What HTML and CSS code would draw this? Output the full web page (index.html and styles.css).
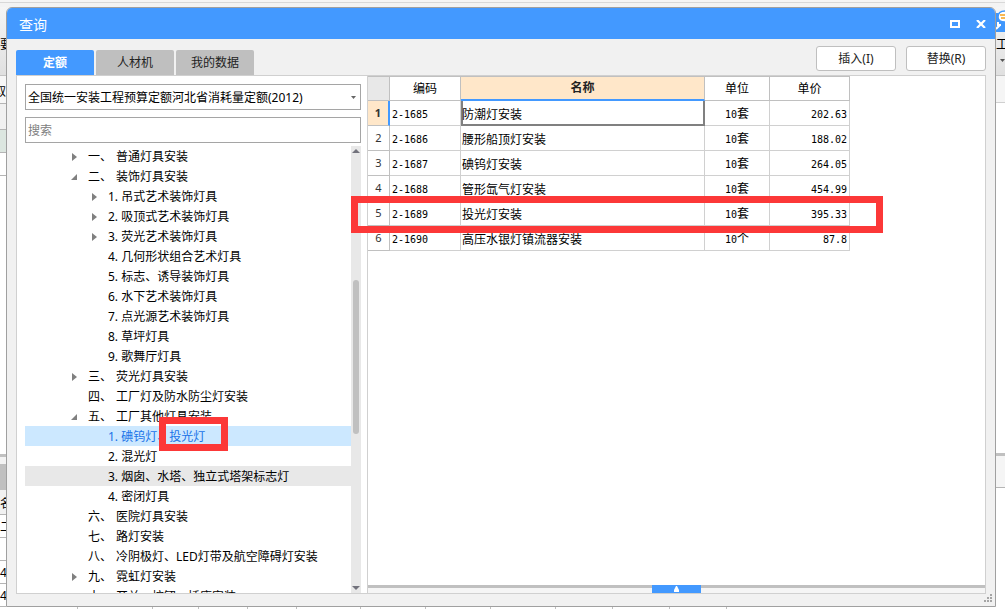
FILE: index.html
```
<!DOCTYPE html>
<html lang="zh-CN">
<head>
<meta charset="utf-8">
<title>查询</title>
<link rel="stylesheet" href="styles.css">
</head>
<body>
<div class="app">
  <div class="app-top"></div>
  <div class="app-middle">
    <div class="edge edge-left">
      <div class="ribbon">要</div>
      <div class="band">取</div>
      <div class="subband"></div>
      <div class="mint"></div>
      <div class="row-a"></div>
      <div class="blank"></div>
      <div class="dark"></div>
      <div class="heading">名</div>
      <div class="cell">二</div>
      <div class="cell"></div>
      <div class="cell">4</div>
      <div class="cell">4</div>
    </div>

    <section class="dialog" aria-label="查询">
      <header class="titlebar">
        <h1>查询</h1>
        <button class="win-btn" aria-label="最大化"><svg width="10" height="8" viewBox="0 0 10 8"><rect x="1" y="1" width="8" height="6" fill="none" stroke="#fff" stroke-width="2"/></svg></button>
        <button class="win-btn" aria-label="关闭"><svg width="10" height="8" viewBox="0 0 10 8"><path d="M1 0L9 8M9 0L1 8" stroke="#fff" stroke-width="2.2"/></svg></button>
      </header>

      <div class="toolbar">
        <nav class="tabs">
          <button class="tab active">定额</button>
          <button class="tab">人材机</button>
          <button class="tab">我的数据</button>
        </nav>
        <div class="actions">
          <button class="action">插入(I)</button>
          <button class="action">替换(R)</button>
        </div>
      </div>

      <div class="content">
        <aside class="side">
          <div class="select-wrap">
            <select class="field" aria-label="定额库"><option>全国统一安装工程预算定额河北省消耗量定额(2012)</option></select>
            <svg class="caret" width="5" height="3" viewBox="0 0 5 3"><path d="M0 0H5L2.5 3Z" fill="#666"/></svg>
          </div>
          <input class="field" type="text" placeholder="搜索" aria-label="搜索">
          <div class="tree-wrap">
            <ul class="tree">
              <li class="node closed"><span class="num">一、</span>普通灯具安装</li>
              <li class="node open"><span class="num">二、</span>装饰灯具安装</li>
              <li class="node sub closed">1. 吊式艺术装饰灯具</li>
              <li class="node sub closed">2. 吸顶式艺术装饰灯具</li>
              <li class="node sub closed">3. 荧光艺术装饰灯具</li>
              <li class="node sub">4. 几何形状组合艺术灯具</li>
              <li class="node sub">5. 标志、诱导装饰灯具</li>
              <li class="node sub">6. 水下艺术装饰灯具</li>
              <li class="node sub">7. 点光源艺术装饰灯具</li>
              <li class="node sub">8. 草坪灯具</li>
              <li class="node sub">9. 歌舞厅灯具</li>
              <li class="node closed"><span class="num">三、</span>荧光灯具安装</li>
              <li class="node"><span class="num">四、</span>工厂灯及防水防尘灯安装</li>
              <li class="node open"><span class="num">五、</span>工厂其他灯具安装</li>
              <li class="node sub selected">1. 碘钨灯、<span class="marked">投光灯</span></li>
              <li class="node sub">2. 混光灯</li>
              <li class="node sub hover">3. 烟囱、水塔、独立式塔架标志灯</li>
              <li class="node sub">4. 密闭灯具</li>
              <li class="node"><span class="num">六、</span>医院灯具安装</li>
              <li class="node"><span class="num">七、</span>路灯安装</li>
              <li class="node"><span class="num">八、</span>冷阴极灯、LED灯带及航空障碍灯安装</li>
              <li class="node closed"><span class="num">九、</span>霓虹灯安装</li>
              <li class="node"><span class="num">十、</span>开关、按钮、插座安装</li>
            </ul>
            <div class="scrollbar">
              <svg width="8" height="4" viewBox="0 0 8 4"><path d="M0 4L4 0L8 4Z" fill="#72727c"/></svg>
              <div class="track"><div class="thumb"></div></div>
              <svg width="8" height="4" viewBox="0 0 8 4"><path d="M0 0H8L4 4Z" fill="#72727c"/></svg>
            </div>
          </div>
        </aside>

        <main class="results">
          <table class="grid">
            <colgroup><col class="c-idx"><col class="c-code"><col class="c-name"><col class="c-unit"><col class="c-price"></colgroup>
            <thead>
              <tr><th class="corner"></th><th>编码</th><th class="current">名称</th><th>单位</th><th>单价</th></tr>
            </thead>
            <tbody>
              <tr class="first"><th>1</th><td class="mono">2-1685</td><td class="name">防潮灯安装</td><td class="unit"><span class="mono">10</span>套</td><td class="mono price">202.63</td></tr>
              <tr><th>2</th><td class="mono">2-1686</td><td class="name">腰形船顶灯安装</td><td class="unit"><span class="mono">10</span>套</td><td class="mono price">188.02</td></tr>
              <tr><th>3</th><td class="mono">2-1687</td><td class="name">碘钨灯安装</td><td class="unit"><span class="mono">10</span>套</td><td class="mono price">264.05</td></tr>
              <tr><th>4</th><td class="mono">2-1688</td><td class="name">管形氙气灯安装</td><td class="unit"><span class="mono">10</span>套</td><td class="mono price">454.99</td></tr>
              <tr class="marked-row"><th>5</th><td class="mono">2-1689</td><td class="name">投光灯安装</td><td class="unit"><span class="mono">10</span>套</td><td class="mono price">395.33</td></tr>
              <tr><th>6</th><td class="mono">2-1690</td><td class="name">高压水银灯镇流器安装</td><td class="unit"><span class="mono">10</span>个</td><td class="mono price">87.8</td></tr>
            </tbody>
          </table>
          <div class="splitter">
            <button class="expand" aria-label="展开"><svg width="5" height="6" viewBox="0 0 5 6"><path d="M2 0H3L5 4V6H0V4Z" fill="#fff"/></svg></button>
          </div>
        </main>
      </div>
      <svg class="grip" width="8" height="8" viewBox="0 0 8 8"><path d="M6 0h2v2H6zM3 3h2v2H3zM6 3h2v2H6zM0 6h2v2H0zM3 6h2v2H3zM6 6h2v2H6z" fill="#a5a5a5"/></svg>
    </section>

    <div class="edge edge-right">
      <div class="ribbon">
        <svg width="9" height="26" viewBox="0 0 9 26"><rect y="6" width="9" height="19" fill="#3f97fd"/><path d="M9 4C4 4 2 6 2 10S5 15 9 15" fill="#fff" stroke="#3f97fd" stroke-width="1.5"/><path d="M4 8H9M5 11H9" stroke="#f5a11c" stroke-width="1.5"/><path d="M0 22L4 18M2 15V18H5" stroke="#fff" stroke-width="2" fill="none"/></svg>
        <span>工具</span>
        <svg class="menu-caret" width="5" height="3" viewBox="0 0 5 3"><path d="M0 0H5L2.5 3Z" fill="#555"/></svg>
      </div>
      <div class="band"></div>
      <div class="blank"></div>
      <div class="strip"></div>
      <div class="rest"></div>
    </div>
  </div>
  <div class="app-bottom"><i></i><i></i><i></i><i></i><i></i><i></i><i></i><i></i><i></i><i></i><i></i><i></i></div>
</div>
</body>
</html>
```
FILE: styles.css
```
* { box-sizing: border-box; }
body {
  margin: 0;
  font: 12px/20px "Noto Sans", "Noto Sans CJK SC", sans-serif;
  color: #000;
  background: #fff;
}
button, input, select { font: inherit; color: inherit; }
button { padding: 0; border: 0; }
svg { display: block; flex: none; }

.app { display: flex; flex-direction: column; height: 100vh; overflow: hidden; }
.app-top { height: 7px; flex: none; background: #f5f5f5; border-bottom: 4px solid #f3f3f3; box-shadow: inset 0 -1px #d8d8d8; }
.app-middle { display: flex; flex: 1; min-height: 0; background: linear-gradient(#f3f3f3 60px, #fff 60px); }
.app-bottom { height: 2px; flex: none; display: grid; grid-template-columns: 78px 75px 46px 49px 49px 64px 65px 65px 65px 57px 57px 57px; }
.app-bottom i { border-right: 1px solid #bfbfbf; }

/* Main window showing on both sides of the dialog */
.edge { display: flex; flex-direction: column; overflow: hidden; flex: none; white-space: nowrap; }
.edge > div { flex: none; overflow: hidden; }
.edge-left { width: 6px; }
.edge-left .ribbon { height: 69px; padding-top: 28px; background: linear-gradient(#f5f5f5, #e0e0e0); border-bottom: 1px solid #c4c4c4; }
.edge-left .band { height: 28px; display: flex; justify-content: flex-end; padding-top: 6px; background: #f7f7f7; border-bottom: 1px solid #b5b5b5; }
.edge-left .subband { height: 26px; background: #f1f1f1; border-bottom: 1px solid #b5b5b5; }
.edge-left .mint { height: 23px; background: #dce6e0; border-bottom: 1px solid #b5b5b5; }
.edge-left .row-a { height: 23px; border-bottom: 1px solid #b5b5b5; }
.edge-left .blank { flex: 1; border-bottom: 3px solid #c0c0c0; }
.edge-left .dark { height: 33px; background: #c0c0c0; border-top: 7px solid #f3f3f3; }
.edge-left .heading { height: 25px; padding-top: 4px; background: #f1f1f1; border-bottom: 1px solid #b5b5b5; }
.edge-left .cell { height: 23px; padding-top: 2px; border-bottom: 1px solid #b5b5b5; }

.edge-right { width: 9px; }
.edge-right .ribbon { height: 69px; background: linear-gradient(#f5f5f5, #e0e0e0); border-bottom: 1px solid #c4c4c4; }
.edge-right .ribbon span { display: block; padding-top: 2px; }
.edge-right .menu-caret { margin: 4px 0 0 4px; }
.edge-right .band { height: 27px; background: #f5f5f5; border-bottom: 1px solid #d0d0d0; }
.edge-right .blank { flex: 1; background: #fff; border-bottom: 3px solid #c0c0c0; }
.edge-right .strip { height: 32px; background: #f5f5f5; border-bottom: 1px solid #b5b5b5; }
.edge-right .rest { height: 119px; background: #fff; }

/* Dialog */
.dialog {
  flex: 1; min-width: 0; position: relative;
  display: flex; flex-direction: column;
  padding-bottom: 12px;
  background: #f1f1f1; border: 1px solid #a0a0a0; border-radius: 6px 6px 0 0;
  overflow: hidden;
}
.titlebar { display: flex; align-items: center; gap: 16px; height: 31px; flex: none; padding: 0 9px 0 12px; background: #4399ff; color: #fff; }
.titlebar h1 { flex: 1; margin: 0; padding-top: 2px; font-size: 14px; font-weight: 400; }
.win-btn { background: none; }

.toolbar { display: flex; justify-content: space-between; padding: 7px 9px 0; height: 36px; flex: none; }
.tabs { display: flex; gap: 2px; align-items: flex-end; }
.tab { width: 78px; height: 25px; background: #bfbfbf; color: #222; border-radius: 2px 2px 0 0; }
.tab.active { background: #4399ff; color: #fff; font-weight: 700; }
.actions { display: flex; gap: 10px; }
.action { width: 80px; height: 25px; background: #fff; border: 1px solid #bfbfbf; border-radius: 3px; color: #222; }

.content { flex: 1; min-height: 0; display: flex; margin: 0 9px; background: #fff; border: 1px solid #d0d0d0; }
.side { display: flex; flex-direction: column; width: 351px; flex: none; padding: 8px 6px 0 8px; border-right: 1px solid #d0d0d0; }
.field { display: block; width: 100%; height: 26px; padding: 1px 2px 0; border: 1px solid #a5a5a5; border-radius: 0; background: #fff; outline: 0; }
.field::placeholder { color: #808080; opacity: 1; }
.select-wrap { position: relative; margin-bottom: 7px; }
.select-wrap select { appearance: none; }
.caret { position: absolute; right: 5px; top: 12px; }

.tree-wrap { display: flex; flex: 1; min-height: 0; padding-top: 3px; }
.tree { flex: 1; min-width: 0; margin: 0; padding: 0; overflow: hidden; list-style: none; white-space: nowrap; }
.node { display: flex; height: 20px; padding-left: 63px; line-height: 22px; }
.node.sub { padding-left: 83px; }
.node .num { width: 28px; }
.node.closed::before, .node.open::before { content: ""; width: 6px; height: 8px; margin: 7px 11px 0 -17px; background: #808080; }
.node.closed::before { width: 5px; margin-left: -16px; clip-path: polygon(0 0, 100% 50%, 0 100%); }
.node.open::before { height: 6px; margin-top: 8px; clip-path: polygon(100% 0, 100% 100%, 0 100%); }
.node.selected { background: #cce8ff; color: #1a73e8; }
.node.hover { background: #e8e8e8; }
.marked { position: relative; }
.marked::after { content: ""; position: absolute; z-index: 2; inset: -9px -23px -5px -10px; border: 7px solid #fc3838; }

.scrollbar { width: 10px; flex: none; display: flex; flex-direction: column; align-items: center; padding: 3px 0; background: #e8e8e8; }
.track { flex: 1; width: 6px; padding-top: 127px; }
.thumb { height: 154px; background: #c0c0c0; border-radius: 3px; }

.results { flex: 1; min-width: 0; display: flex; flex-direction: column; justify-content: space-between; }
.grid { table-layout: fixed; width: 482px; border-collapse: separate; border-spacing: 0; border-top: 1px solid #c0c0c0; }
.c-idx { width: 22px; }
.c-code { width: 71px; }
.c-name { width: 244px; }
.c-unit { width: 65px; }
.c-price { width: 80px; }
.grid th, .grid td { height: 25px; padding: 3px 1px 0; border-right: 1px solid #d0d0d0; border-bottom: 1px solid #d0d0d0; line-height: 18px; }
.grid th { font-weight: 400; border-color: #c0c0c0; text-align: center; }
.grid thead th { height: 24px; padding-top: 0; }
.grid tbody th { padding-top: 0; font-size: 11px; color: #333; }
.grid .corner { background: #e8e8e8; }
.grid .current { background: #ffe7c9; font-weight: 700; border-bottom: 2px solid #4399ff; color: #222; }
.grid .first th { background: #ffe7c9; font-weight: 700; border-right: 2px solid #4399ff; }
.grid .first .name { box-shadow: inset 2px -1px #808080, inset -1px 0 #808080; border-color: #808080; }
.mono { font-family: "DejaVu Sans Mono", monospace; font-size: 10px; }
.grid td.mono { padding-left: 2px; }
.unit { text-align: center; }
.grid .price { text-align: right; padding-right: 2px; }
.marked-row { position: relative; }
.marked-row::after { content: ""; position: absolute; z-index: 3; inset: -5px -33px -7px -17px; border: 7px solid #fc3838; }

.splitter { height: 8px; border-top: 3px solid #c0c0c0; background: #f5f5f5; display: flex; justify-content: center; }
.expand { width: 49px; height: 8px; margin-top: -3px; display: flex; align-items: center; justify-content: center; background: #4399ff; }
.grip { position: absolute; right: 3px; bottom: 4px; }
```
